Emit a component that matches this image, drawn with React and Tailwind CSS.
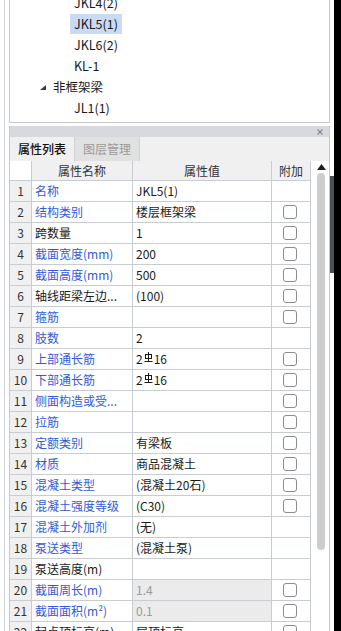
import React from 'react';

const FONT = { fontFamily: '"Noto Sans CJK SC", "Microsoft YaHei", sans-serif' };

// name, value, blue label?, has checkbox?, readonly (gray value cell)?
const rows = [
  ['名称', 'JKL5(1)', true, false],
  ['结构类别', '楼层框架梁', true, true],
  ['跨数量', '1', false, true],
  ['截面宽度(mm)', '200', true, true],
  ['截面高度(mm)', '500', true, true],
  ['轴线距梁左边...', '(100)', false, true],
  ['箍筋', '', true, true],
  ['肢数', '2', true, false],
  ['上部通长筋', 'rebar', true, true],
  ['下部通长筋', 'rebar', true, true],
  ['侧面构造或受...', '', true, true],
  ['拉筋', '', true, true],
  ['定额类别', '有梁板', true, true],
  ['材质', '商品混凝土', true, true],
  ['混凝土类型', '(混凝土20石)', true, true],
  ['混凝土强度等级', '(C30)', true, true],
  ['混凝土外加剂', '(无)', true, false],
  ['泵送类型', '(混凝土泵)', true, false],
  ['泵送高度(m)', '', false, false],
  ['截面周长(m)', '1.4', true, true, true],
  ['截面面积(m²)', '0.1', true, true, true],
  ['起点顶标高(m)', '层顶标高', false, true],
];

const treeItems = ['JKL4(2)', 'JKL5(1)', 'JKL6(2)', 'KL-1'];

function RebarSymbol() {
  return (
    <svg width="9" height="11" viewBox="0 0 9 11" className="mx-[1px] -mt-[3px]" fill="none" stroke="#1a1a1a" strokeWidth="1">
      <rect x="1.5" y="2.5" width="6" height="4" />
      <line x1="4.5" y1="0" x2="4.5" y2="9.5" />
      <line x1="0.5" y1="9.5" x2="8.5" y2="9.5" />
    </svg>
  );
}

function Checkbox() {
  return <div className="w-[14px] h-[14px] rounded-[3px] border border-[#8c8c8c] bg-white" />;
}

function TreePanel() {
  return (
    <div className="h-[123px] shrink-0 border-x border-b border-[#c8c8c8] bg-white overflow-hidden">
      <div className="-mt-[7px] flex flex-col text-[12.5px] text-[#1a1a1a]">
        {treeItems.map((t, i) => (
          <div key={t} className="h-[21px] shrink-0 flex items-start">
            <span className={`ml-[60px] h-[20px] px-[4px] flex items-center ${i === 1 ? 'bg-[#c9dbf2]' : ''}`}>{t}</span>
          </div>
        ))}
        <div className="h-[21px] shrink-0 flex items-center">
          <svg width="6" height="5" viewBox="0 0 6 5" className="ml-[30px]">
            <polygon points="6,0 6,5 0,5" fill="#3c3c3c" />
          </svg>
          <span className="ml-[7px]">非框架梁</span>
        </div>
        <div className="h-[21px] shrink-0 flex items-center">
          <span className="ml-[64px]">JL1(1)</span>
        </div>
      </div>
    </div>
  );
}

function PropertyTable() {
  return (
    <div className="flex shrink-0">
      <div className="w-[301px]">
        <div className="flex h-[20px] border-b border-[#c8ccd3] text-[12px] text-[#333]">
          <div className="w-[22px] bg-white border-r border-[#c8ccd3]" />
          <div className="w-[101px] bg-[#f0f0f0] border-r border-[#c8ccd3] flex items-center justify-center">属性名称</div>
          <div className="w-[139px] bg-[#f0f0f0] border-r border-[#c8ccd3] flex items-center justify-center">属性值</div>
          <div className="w-[39px] bg-[#f0f0f0] border-r border-[#c8ccd3] flex items-center justify-center">附加</div>
        </div>
        {rows.map(([name, value, blue, check, readonly], i) => (
          <div key={i} className="flex h-[21px] border-b border-[#c8ccd3] text-[12px]">
            <div className="w-[22px] bg-[#f0f0f0] border-r border-[#c8ccd3] flex items-center justify-center text-[#333]">{i + 1}</div>
            <div className={`w-[101px] border-r border-[#c8ccd3] flex items-center pl-[3px] whitespace-nowrap overflow-hidden ${blue ? 'text-[#2f5bd8]' : 'text-[#1a1a1a]'}`}>{name}</div>
            <div className={`w-[139px] border-r border-[#c8ccd3] flex items-center pl-[3px] whitespace-nowrap ${readonly ? 'bg-[#ebebeb] text-[#9a9a9a]' : 'bg-white text-[#1a1a1a]'}`}>
              {value === 'rebar' ? (
                <span className="flex items-center">2<RebarSymbol />16</span>
              ) : value}
            </div>
            <div className="w-[39px] border-r border-[#c8ccd3] flex items-center pl-[11px]">
              {check && <Checkbox />}
            </div>
          </div>
        ))}
      </div>
      <div className="w-[18px] flex flex-col items-center pl-[2px]">
        <svg width="9" height="6" viewBox="0 0 9 6" className="mt-[3px]">
          <polygon points="4.5,0 9,6 0,6" fill="#1f1f1f" />
        </svg>
        <div className="mt-[3px] w-[8px] h-[377px] rounded-full bg-[#cdcdcd]" />
      </div>
    </div>
  );
}

export default function App() {
  return (
    <div className="w-[341px] h-[631px] overflow-hidden flex bg-white" style={FONT}>
      <div className="w-[4px] shrink-0" />
      <div className="w-px shrink-0 bg-[#d3d7de]" />
      <div className="w-[4px] shrink-0" />
      <div className="w-[321px] shrink-0 flex flex-col overflow-hidden">
        <TreePanel />
        <div className="h-[3px] shrink-0" />
        <div className="flex-1 min-h-0 overflow-hidden border-x border-[#c8c8c8] flex flex-col">
          <div className="h-[11px] shrink-0 bg-[#d6d9de] flex items-center justify-end pr-[6px]">
            <svg width="6" height="6" viewBox="0 0 6 6" stroke="#8a8a8a" strokeWidth="1.3">
              <line x1="0.5" y1="0.5" x2="5.5" y2="5.5" />
              <line x1="5.5" y1="0.5" x2="0.5" y2="5.5" />
            </svg>
          </div>
          <div className="h-[24px] shrink-0 bg-[#f0f0f0] flex text-[12px]">
            <div className="w-[64px] flex items-center justify-center text-[#111] font-medium">属性列表</div>
            <div className="w-[66px] bg-[#e1e1e1] border-x border-[#d2d2d2] flex items-center justify-center text-[#9a9a9a]">图层管理</div>
          </div>
          <PropertyTable />
        </div>
      </div>
      <div className="w-[4px] shrink-0">
        <div className="mt-[176px] h-[97px] bg-[#4b5057]" />
      </div>
      <div className="w-[7px] shrink-0 bg-black" />
    </div>
  );
}
